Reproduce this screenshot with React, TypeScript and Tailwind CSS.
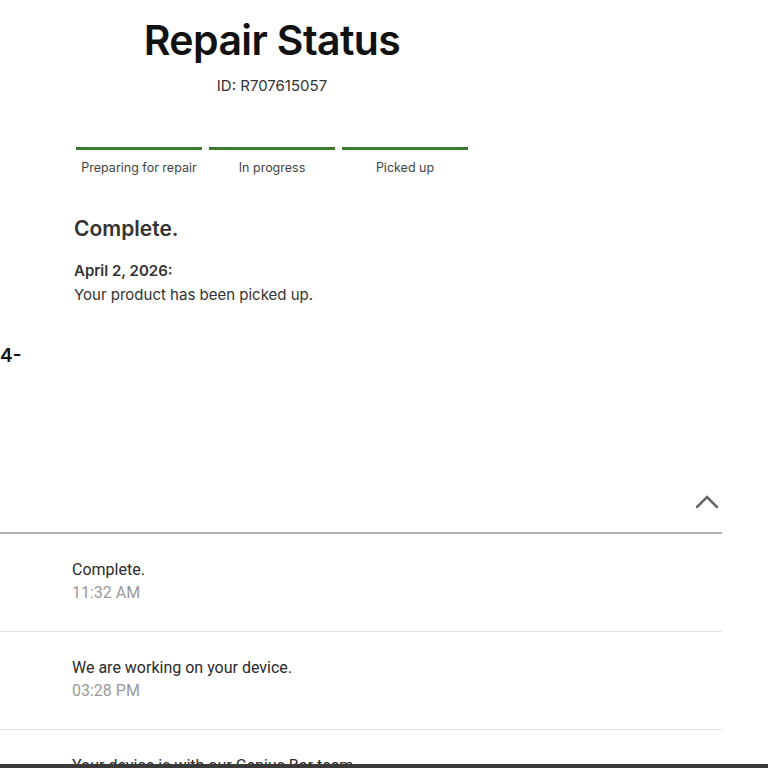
import React from 'react';

const steps = ['Preparing for repair', 'In progress', 'Picked up'];

const history = [
  { title: 'Complete.', time: '11:32 AM' },
  { title: 'We are working on your device.', time: '03:28 PM' },
  { title: 'Your device is with our Genius Bar team.', time: '10:05 AM' },
];

const App: React.FC = () => {
  return (
    <div
      className="h-[768px] w-[768px] flex flex-col overflow-hidden bg-white text-[#1d1d1f]"
      style={{ fontFamily: 'Inter, "Liberation Sans", Arial, sans-serif' }}
    >
      <div className="flex-1 overflow-hidden">
        {/* Encabezado */}
        <div className="w-[400px] ml-[72px] flex flex-col items-center">
          <h1 className="mt-[14px] text-[41px] leading-[52px] font-semibold tracking-[-0.6px] text-[#111]">
            Repair Status
          </h1>
          <p className="mt-[10px] text-[15px] leading-5 text-[#333]">ID: R707615057</p>
        </div>

        {/* Barra de progreso */}
        <div className="ml-[76px] mt-[51px] flex gap-[7px]">
          {steps.map((s) => (
            <div key={s} className="w-[126px] flex flex-col items-center">
              <div className="h-[3px] w-full bg-[#3c7a2e]" />
              <span className="mt-[10px] text-[12.5px] leading-4 text-[#444]">{s}</span>
            </div>
          ))}
        </div>

        {/* Estado actual */}
        <div className="ml-[74px] mt-[39px]">
          <h2 className="text-[21px] leading-7 font-semibold text-[#333]">Complete.</h2>
          <p className="mt-[17px] text-[15px] leading-[22px] font-semibold text-[#333]">April 2, 2026:</p>
          <p className="mt-[2px] text-[15px] leading-[22px] text-[#333]">Your product has been picked up.</p>
        </div>

        <div className="mt-[38px] text-[19px] leading-6 font-semibold text-[#111]">4-</div>

        {/* Historial */}
        <div className="w-[722px] mt-[125px]">
          <div className="flex justify-end pr-[3px] pb-[23px]">
            <svg width="24" height="16" viewBox="0 0 24 16" fill="none">
              <path d="M2 14 L12 4 L22 14" stroke="#666" strokeWidth="2.5" strokeLinecap="round" />
            </svg>
          </div>
          <div className="h-[2px] bg-[#b3b3b3]" />
          {history.map((h) => (
            <div key={h.title} className="border-b border-[#e3e3e3] pl-[72px] pt-[25px] h-[98px]">
              <p
                className="text-[16px] leading-[22px] text-[#2a2a2a]"
                style={{ fontFamily: 'Roboto, "Liberation Sans", sans-serif' }}
              >
                {h.title}
              </p>
              <p
                className="mt-[1px] text-[16px] leading-[22px] text-[#999]"
                style={{ fontFamily: 'Roboto, "Liberation Sans", sans-serif' }}
              >
                {h.time}
              </p>
            </div>
          ))}
        </div>
      </div>
      <div className="h-[4px] bg-[#3a3a3a]" />
    </div>
  );
};

export default App;
